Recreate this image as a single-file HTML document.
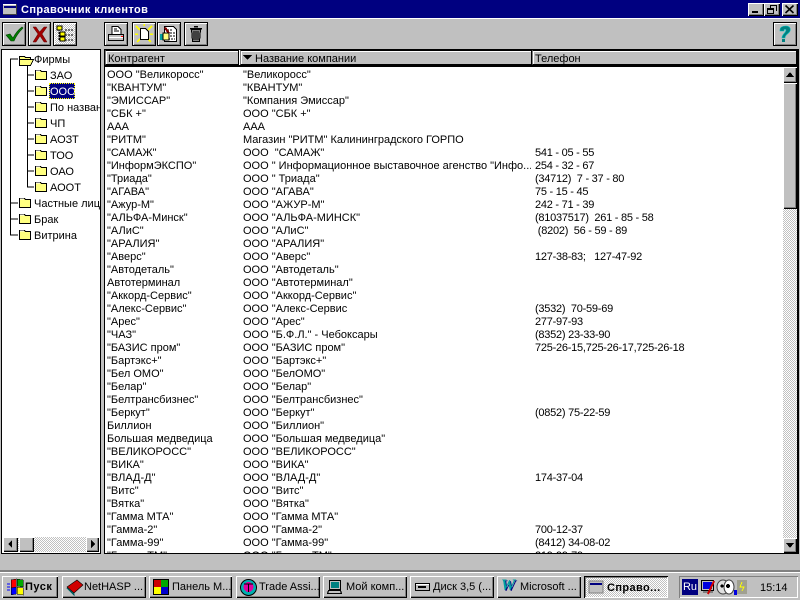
<!DOCTYPE html>
<html><head><meta charset="utf-8">
<style>
html,body{margin:0;padding:0;width:800px;height:600px;overflow:hidden;background:#c0c0c0}
body{font:11px/13px "Liberation Sans",sans-serif;color:#000;position:relative}
div,svg,span{position:absolute;box-sizing:border-box}
svg{shape-rendering:crispEdges;overflow:visible}
.up{background:#c0c0c0;box-shadow:inset 1px 1px 0 #fff,inset -1px -1px 0 #000,inset -2px -2px 0 #808080}
.tb{background:#c0c0c0;border:1px solid #000;box-shadow:inset 1px 1px 0 #fff,inset -1px -1px 0 #808080}
.dither{background:repeating-conic-gradient(#fff 0 25%,#c0c0c0 0 50%) 0 0/2px 2px}
.r{left:0;height:13px;white-space:pre;line-height:13px}
.c1{left:107px;width:132px;overflow:hidden}
.c2{left:243px;width:288px;overflow:hidden}
.c3{left:535px;width:240px;overflow:hidden;letter-spacing:-.25px}
.t{white-space:pre;line-height:13px;transform:translateY(1px)}
.task{top:576px;height:22px;width:84px;white-space:pre;line-height:23px}
.task span{left:23px;top:0;white-space:pre}
.h{top:50px;height:15px;background:#c0c0c0;border:1px solid #000;border-left-color:#808080;box-shadow:inset 1px 1px 0 #fff;line-height:13px;white-space:pre}
</style></head><body>

<!-- title bar -->
<div style="left:0;top:0;width:800px;height:18px;background:#000080"></div>
<svg style="left:3px;top:4px" width="14" height="11"><rect width="14" height="11" fill="#c0c0c0"/><rect x="0" y="0" width="14" height="1" fill="#fff"/><rect x="1" y="2" width="12" height="2" fill="#000080"/><rect x="13" y="0" width="1" height="11" fill="#404040"/><rect x="0" y="10" width="14" height="1" fill="#404040"/></svg>
<div class="t" style="left:21px;top:3px;font-weight:bold;color:#fff;font-size:11px;letter-spacing:.4px;line-height:13px">Справочник клиентов</div>
<div class="up" style="left:748px;top:3px;width:16px;height:13px"><div style="left:4px;top:8px;width:6px;height:2px;background:#000"></div></div>
<div class="up" style="left:764px;top:3px;width:16px;height:13px"><svg width="16" height="13"><path d="M6 2h7v1h-7zM6 3h1v2h-1zM12 3h1v5h-1zM3 5h7v1h-7zM3 6h1v4h-1zM9 6h1v4h-1zM3 10h7v1h-7zM3 6h7v1h-7z"/></svg></div>
<div class="up" style="left:782px;top:3px;width:16px;height:13px"><svg width="16" height="13"><path d="M3.500 2.500l8 7.500M11.500 2.500l-8 7.500" stroke="#000" stroke-width="1.600" fill="none" style="shape-rendering:auto"/></svg></div>

<!-- toolbar -->
<div style="left:0;top:18px;width:800px;height:1px;background:#fff"></div>
<div class="tb" style="left:2px;top:22px;width:24px;height:24px"><svg width="22" height="22"><path d="M3 12l4-1 3 4C12 11 15 7 19 4l1 1c-4 4-7 8-9 13H8z" fill="#008000" stroke="#004000" stroke-width=".6" style="shape-rendering:auto"/></svg></div>
<div class="tb" style="left:28px;top:22px;width:23px;height:24px"><svg width="21" height="22"><path d="M4 4h3l3.500 5L15 4h3l-5 7 5 8h-3l-4-6-4 6H4l5-8z" fill="#a00000" stroke="#600000" stroke-width=".5" style="shape-rendering:auto"/></svg></div>
<div class="tb dither" style="left:53px;top:22px;width:24px;height:24px"><svg width="22" height="22"><path d="M5 6v12M6 10h3M6 16h3M11 7h8M11 12h8M11 17h8" stroke="#000" stroke-dasharray="2 1" fill="none"/><rect x="3" y="3" width="5" height="4" fill="#ffff00" stroke="#000" stroke-width=".6"/><rect x="6" y="9" width="5" height="4" fill="#ffff00" stroke="#000" stroke-width=".6"/><rect x="6" y="14" width="5" height="4" fill="#ffff00" stroke="#000" stroke-width=".6"/></svg></div>

<div class="tb" style="left:104px;top:22px;width:24px;height:24px"><svg width="22" height="22"><path d="M7 3.500h6l3 3v5h-9z" fill="#fff" stroke="#000"/><path d="M9 6h3M9 8h5" stroke="#000"/><path d="M3.500 11.500h15v6h-15z" fill="#c0c0c0" stroke="#000"/><rect x="4" y="14" width="14" height="1" fill="#fff"/><rect x="16" y="13" width="2" height="1" fill="#f00"/></svg></div>
<div class="tb" style="left:132px;top:22px;width:24px;height:24px"><svg width="22" height="22"><path d="M3 3l4 4M19 3l-4 4M2 11h3M17 11h3M4 19l3-3M18 19l-3-3M11 1v2" stroke="#ffff00" stroke-width="1.500"/><path d="M7.500 5.500h5l3 3v8h-8z" fill="#fff" stroke="#000"/></svg></div>
<div class="tb" style="left:157px;top:22px;width:24px;height:24px"><svg width="22" height="22"><path d="M6.500 3.500h9l3 3v12h-12z" fill="#fff" stroke="#000"/><path d="M9 7h6M12 10h5M12 13h5M10 16h7" stroke="#000" stroke-dasharray="2 1"/><rect x="2" y="11" width="5" height="6" fill="#00a0a0"/><path d="M10 11L6 5l2-1 4 6z" fill="#800000"/><path d="M5 10h6v7H5z" fill="#ffff80" stroke="#000" stroke-width=".6"/></svg></div>
<div class="tb" style="left:184px;top:22px;width:24px;height:24px"><svg width="22" height="22"><path d="M5 5.500h12M9 3.500h4" stroke="#000" stroke-width="1.500"/><path d="M6.500 6.500h9l-1 12h-7z" fill="#808080" stroke="#000"/><path d="M9 8v9M11 8v9M13 8v9" stroke="#000"/></svg></div>

<div class="tb" style="left:773px;top:22px;width:24px;height:24px"><svg width="22" height="22"><path d="M6 7C6 4 9 3 12 3c3 0 5 2 4 5-1 3-5 3-5 7H8c0-4 4-5 4-8 0-1-2-1-2 0v1H6z" fill="#008080" stroke="#00c0c0" stroke-width=".6" style="shape-rendering:auto"/><rect x="8" y="16" width="3" height="3" fill="#008080"/></svg></div>

<!-- left tree panel -->
<div style="left:1px;top:49px;width:100px;height:505px;background:#fff;border:1px solid #000;overflow:hidden">
<svg style="left:0;top:0" width="98" height="499"><g stroke="#000" fill="none"><path d="M8.500 9v176"/><path d="M8 9h8M8 153h8M8 169h8M8 185h8"/><path d="M25.500 14v123.500"/><path d="M25 25h7M25 41h7M25 57h7M25 73h7M25 89h7M25 105h7M25 121h7M25 137h7"/></g></svg>
<svg style="left:0;top:0" width="98" height="499">
<defs><g id="f"><path d="M1.500 2.500h5l1 1h5v8h-11z" fill="#ffff80" stroke="#000"/><path d="M2 3h4" stroke="#fff"/></g></defs>
<path transform="translate(16,3)" d="M1.500 3.500h5l1 1h5v2h-11zM1.500 6.500h11l3 0-3 6h-11z" fill="#ffff80" stroke="#000"/>
<use href="#f" x="32" y="18"/><use href="#f" x="32" y="34"/><use href="#f" x="32" y="50"/><use href="#f" x="32" y="66"/><use href="#f" x="32" y="82"/><use href="#f" x="32" y="98"/><use href="#f" x="32" y="114"/><use href="#f" x="32" y="130"/>
<use href="#f" x="16" y="146"/><use href="#f" x="16" y="162"/><use href="#f" x="16" y="178"/>
</svg>
<div class="t" style="left:32px;top:3px">Фирмы</div>
<div class="t" style="left:48px;top:19px">ЗАО</div>
<div class="t" style="left:47px;top:33px;background:#000080;color:#fff;padding:0 1px;height:16px;line-height:18px;outline:1px dotted #ff0;outline-offset:-1px;width:26px;transform:none">ООО</div>
<div class="t" style="left:48px;top:51px;width:50px;overflow:hidden">По названию</div>
<div class="t" style="left:48px;top:67px">ЧП</div>
<div class="t" style="left:48px;top:83px">АОЗТ</div>
<div class="t" style="left:48px;top:99px">ТОО</div>
<div class="t" style="left:48px;top:115px">ОАО</div>
<div class="t" style="left:48px;top:131px">АООТ</div>
<div class="t" style="left:32px;top:147px;width:66px;overflow:hidden">Частные лица</div>
<div class="t" style="left:32px;top:163px">Брак</div>
<div class="t" style="left:32px;top:179px">Витрина</div>
</div>
<!-- left scrollbar -->
<div class="dither" style="left:3px;top:537px;width:96px;height:15px"></div>
<div class="up" style="left:3px;top:537px;width:15px;height:15px"><svg width="15" height="15"><path d="M9 3v8L5 7z"/></svg></div>
<div class="up" style="left:19px;top:537px;width:15px;height:15px"></div>
<div class="up" style="left:86px;top:537px;width:13px;height:15px"><svg width="13" height="15"><path d="M5 3v8l4-4z"/></svg></div>

<!-- right grid -->
<div style="left:104px;top:49px;width:695px;height:505px;background:#fff;border-top:1px solid #000;border-left:1px solid #000;border-right:2px solid #000;border-bottom:1px solid #000"></div>
<div style="left:105px;top:65px;width:692px;height:2px;background:#000"></div>
<div class="h" style="left:105px;width:134px;"><span style="left:2px;top:2px">Контрагент</span></div>
<div class="h" style="left:240px;width:292px;"><svg width="12" height="13" style="left:1px;top:0"><path d="M1 4h9L5.500 9z"/></svg><span style="left:14px;top:2px">Название компании</span></div>
<div class="h" style="left:532px;width:265px;"><span style="left:2px;top:2px">Телефон</span></div>

<div style="left:105px;top:69px;width:678px;height:484px;overflow:hidden" id="g">
<div style="left:-105px;top:0;width:800px;height:520px">
<div class="r c1" style="top:0">ООО "Великоросс"</div><div class="r c2" style="top:0">"Великоросс"</div>
<div class="r c1" style="top:13px">"КВАНТУМ"</div><div class="r c2" style="top:13px">"КВАНТУМ"</div>
<div class="r c1" style="top:26px">"ЭМИССАР"</div><div class="r c2" style="top:26px">"Компания Эмиссар"</div>
<div class="r c1" style="top:39px">"СБК +"</div><div class="r c2" style="top:39px">ООО "СБК +"</div>
<div class="r c1" style="top:52px">ААА</div><div class="r c2" style="top:52px">ААА</div>
<div class="r c1" style="top:65px">"РИТМ"</div><div class="r c2" style="top:65px">Магазин "РИТМ" Калининградского ГОРПО</div>
<div class="r c1" style="top:78px">"САМАЖ"</div><div class="r c2" style="top:78px">ООО  "САМАЖ"</div><div class="r c3" style="top:78px">541 - 05 - 55</div>
<div class="r c1" style="top:91px">"ИнформЭКСПО"</div><div class="r c2" style="top:91px">ООО " Информационное выставочное агенство "Инфо...</div><div class="r c3" style="top:91px">254 - 32 - 67</div>
<div class="r c1" style="top:104px">"Триада"</div><div class="r c2" style="top:104px">ООО " Триада"</div><div class="r c3" style="top:104px">(34712)  7 - 37 - 80</div>
<div class="r c1" style="top:117px">"АГАВА"</div><div class="r c2" style="top:117px">ООО "АГАВА"</div><div class="r c3" style="top:117px">75 - 15 - 45</div>
<div class="r c1" style="top:130px">"Ажур-М"</div><div class="r c2" style="top:130px">ООО "АЖУР-М"</div><div class="r c3" style="top:130px">242 - 71 - 39</div>
<div class="r c1" style="top:143px">"АЛЬФА-Минск"</div><div class="r c2" style="top:143px">ООО "АЛЬФА-МИНСК"</div><div class="r c3" style="top:143px">(81037517)  261 - 85 - 58</div>
<div class="r c1" style="top:156px">"АЛиС"</div><div class="r c2" style="top:156px">ООО "АЛиС"</div><div class="r c3" style="top:156px"> (8202)  56 - 59 - 89</div>
<div class="r c1" style="top:169px">"АРАЛИЯ"</div><div class="r c2" style="top:169px">ООО "АРАЛИЯ"</div>
<div class="r c1" style="top:182px">"Аверс"</div><div class="r c2" style="top:182px">ООО "Аверс"</div><div class="r c3" style="top:182px">127-38-83;   127-47-92</div>
<div class="r c1" style="top:195px">"Автодеталь"</div><div class="r c2" style="top:195px">ООО "Автодеталь"</div>
<div class="r c1" style="top:208px">Автотерминал</div><div class="r c2" style="top:208px">ООО "Автотерминал"</div>
<div class="r c1" style="top:221px">"Аккорд-Сервис"</div><div class="r c2" style="top:221px">ООО "Аккорд-Сервис"</div>
<div class="r c1" style="top:234px">"Алекс-Сервис"</div><div class="r c2" style="top:234px">ООО "Алекс-Сервис</div><div class="r c3" style="top:234px">(3532)  70-59-69</div>
<div class="r c1" style="top:247px">"Арес"</div><div class="r c2" style="top:247px">ООО "Арес"</div><div class="r c3" style="top:247px">277-97-93</div>
<div class="r c1" style="top:260px">"ЧАЗ"</div><div class="r c2" style="top:260px">ООО "Б.Ф.Л." - Чебоксары</div><div class="r c3" style="top:260px">(8352) 23-33-90</div>
<div class="r c1" style="top:273px">"БАЗИС пром"</div><div class="r c2" style="top:273px">ООО "БАЗИС пром"</div><div class="r c3" style="top:273px">725-26-15,725-26-17,725-26-18</div>
<div class="r c1" style="top:286px">"Бартэкс+"</div><div class="r c2" style="top:286px">ООО "Бартэкс+"</div>
<div class="r c1" style="top:299px">"Бел ОМО"</div><div class="r c2" style="top:299px">ООО "БелОМО"</div>
<div class="r c1" style="top:312px">"Белар"</div><div class="r c2" style="top:312px">ООО "Белар"</div>
<div class="r c1" style="top:325px">"Белтрансбизнес"</div><div class="r c2" style="top:325px">ООО "Белтрансбизнес"</div>
<div class="r c1" style="top:338px">"Беркут"</div><div class="r c2" style="top:338px">ООО "Беркут"</div><div class="r c3" style="top:338px">(0852) 75-22-59</div>
<div class="r c1" style="top:351px">Биллион</div><div class="r c2" style="top:351px">ООО "Биллион"</div>
<div class="r c1" style="top:364px">Большая медведица</div><div class="r c2" style="top:364px">ООО "Большая медведица"</div>
<div class="r c1" style="top:377px">"ВЕЛИКОРОСС"</div><div class="r c2" style="top:377px">ООО "ВЕЛИКОРОСС"</div>
<div class="r c1" style="top:390px">"ВИКА"</div><div class="r c2" style="top:390px">ООО "ВИКА"</div>
<div class="r c1" style="top:403px">"ВЛАД-Д"</div><div class="r c2" style="top:403px">ООО "ВЛАД-Д"</div><div class="r c3" style="top:403px">174-37-04</div>
<div class="r c1" style="top:416px">"Витс"</div><div class="r c2" style="top:416px">ООО "Витс"</div>
<div class="r c1" style="top:429px">"Вятка"</div><div class="r c2" style="top:429px">ООО "Вятка"</div>
<div class="r c1" style="top:442px">"Гамма МТА"</div><div class="r c2" style="top:442px">ООО "Гамма МТА"</div>
<div class="r c1" style="top:455px">"Гамма-2"</div><div class="r c2" style="top:455px">ООО "Гамма-2"</div><div class="r c3" style="top:455px">700-12-37</div>
<div class="r c1" style="top:468px">"Гамма-99"</div><div class="r c2" style="top:468px">ООО "Гамма-99"</div><div class="r c3" style="top:468px">(8412) 34-08-02</div>
<div class="r c1" style="top:481px">"Гамма-ТМ"</div><div class="r c2" style="top:481px">ООО "Гамма-ТМ"</div><div class="r c3" style="top:481px">219-99-79</div>
</div></div>

<!-- right scrollbar -->
<div class="dither" style="left:783px;top:67px;width:14px;height:486px"></div>
<div class="up" style="left:783px;top:67px;width:14px;height:16px"><svg width="14" height="16"><path d="M7 5l4 5H3z"/></svg></div>
<div class="up" style="left:783px;top:83px;width:14px;height:126px"></div>
<div class="up" style="left:783px;top:538px;width:14px;height:15px"><svg width="14" height="15"><path d="M3 5h8l-4 5z"/></svg></div>

<!-- status bar -->
<div style="left:0;top:570px;width:800px;height:2px;background:#808080"></div>
<div style="left:0;top:572px;width:800px;height:28px;background:#c0c0c0;box-shadow:inset 0 1px 0 #fff"></div>

<!-- taskbar -->
<div class="up task" style="left:2px;width:56px"><svg width="20" height="18" style="left:4px;top:2px"><path d="M5 2l5-1v8l-5 1z" fill="#f00" stroke="#000" stroke-width=".5"/><path d="M11 1l6 1v7l-6-1z" fill="#0a0" stroke="#000" stroke-width=".5"/><path d="M5 10l5-1v7l-5 1z" fill="#00f" stroke="#000" stroke-width=".5"/><path d="M11 9l6 1v7l-6-1z" fill="#ff0" stroke="#000" stroke-width=".5"/><path d="M1 6h3M1 9h3M1 12h3" stroke="#00f"/></svg><span style="font-weight:bold;left:23px;letter-spacing:.5px">Пуск</span></div>
<div class="up task" style="left:62px"><svg width="18" height="16" style="left:4px;top:3px"><path d="M1 8l10-7 6 5-9 8z" fill="#d00000" stroke="#000" stroke-width=".6" style="shape-rendering:auto"/><path d="M1 9l7 6 0 1z" fill="#006060" stroke="#006060"/></svg><span style="left:22px">NetHASP ...</span></div>
<div class="up task" style="left:149px;width:83px"><svg width="16" height="16" style="left:4px;top:3px"><rect width="16" height="16" fill="#000"/><rect x="1" y="1" width="7" height="7" fill="#c00"/><rect x="8" y="1" width="7" height="7" fill="#0a0"/><rect x="1" y="8" width="7" height="7" fill="#ff0"/><rect x="8" y="8" width="7" height="7" fill="#00c"/></svg><span>Панель М...</span></div>
<div class="up task" style="left:236px"><svg width="17" height="17" style="left:4px;top:3px"><circle cx="8.500" cy="8.500" r="8" fill="#00b0b0" stroke="#000" style="shape-rendering:auto"/><circle cx="8.500" cy="8" r="5" fill="#e000a0"/><path d="M4 5h9" stroke="#000"/><path d="M8.500 5v8" stroke="#000"/></svg><span>Trade Assi...</span></div>
<div class="up task" style="left:323px"><svg width="16" height="16" style="left:4px;top:3px"><rect x="2.500" y="1.500" width="11" height="9" fill="#c0c0c0" stroke="#000"/><rect x="4" y="3" width="8" height="6" fill="#008080"/><path d="M1.500 11.500h12l1 3h-14z" fill="#c0c0c0" stroke="#000"/></svg><span>Мой комп...</span></div>
<div class="up task" style="left:410px"><svg width="17" height="16" style="left:4px;top:3px"><path d="M1.500 4.500h14v7h-14z" fill="#c0c0c0" stroke="#000"/><rect x="2" y="5" width="13" height="1" fill="#fff"/><rect x="4" y="7" width="8" height="2" fill="#000"/></svg><span>Диск 3,5 (...</span></div>
<div class="up task" style="left:497px"><div style="left:4px;top:1px;width:18px;height:18px;font:italic bold 16px/18px 'Liberation Serif',serif;color:#00a0a0;text-shadow:1px 1px 0 #000080">W</div><span>Microsoft ...</span></div>
<div class="task dither" style="left:584px;box-shadow:inset 1px 1px 0 #000,inset -1px -1px 0 #fff,inset 2px 2px 0 #808080"><svg width="14" height="12" style="left:5px;top:5px"><rect width="14" height="12" fill="#c0c0c0" stroke="#808080"/><rect x="1" y="2" width="12" height="2" fill="#000080"/></svg><span style="font-weight:bold;top:1px;letter-spacing:.4px">Справо...</span></div>

<!-- tray -->
<div style="left:679px;top:576px;width:119px;height:22px;box-shadow:inset 1px 1px 0 #808080,inset -1px -1px 0 #fff"></div>
<div style="left:682px;top:579px;width:16px;height:16px;background:#000080;color:#fff;text-align:center;line-height:16px">Ru</div>
<svg style="left:700px;top:579px" width="16" height="16"><rect x="1.500" y="1.500" width="12" height="10" fill="#c0c0c0" stroke="#000"/><rect x="3" y="3" width="9" height="7" fill="#0000e0"/><path d="M3 12h10v2H3z" fill="#808080"/><path d="M14 2L8 15" stroke="#d00000" stroke-width="2"/></svg>
<svg style="left:716px;top:579px" width="18" height="16"><ellipse cx="7" cy="8" rx="6" ry="7" fill="#e0e0e0" stroke="#404040" style="shape-rendering:auto"/><ellipse cx="13" cy="8" rx="5" ry="7" fill="#fff" stroke="#404040" style="shape-rendering:auto"/><circle cx="12" cy="7" r="2"/><circle cx="6" cy="7" r="1.500"/></svg>
<svg style="left:734px;top:579px" width="14" height="16"><rect x="3" y="1" width="10" height="14" fill="#a0a090"/><rect x="0" y="11" width="3" height="5" fill="#0000e0"/><path d="M8 3l-2 5h4l-2 4" stroke="#ff0" fill="none"/></svg>
<div class="t" style="left:760px;top:581px">15:14</div>

</body></html>
